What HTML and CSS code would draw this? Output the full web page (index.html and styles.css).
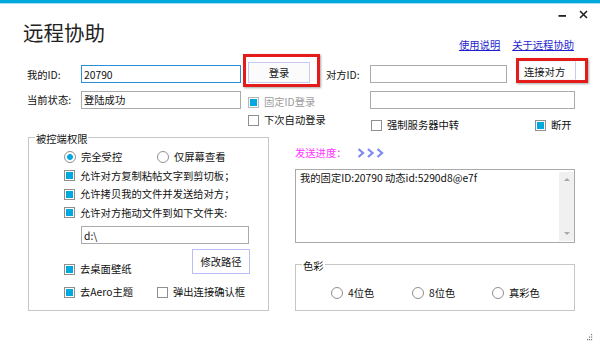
FILE: index.html
```html
<!DOCTYPE html>
<html lang="zh-CN">

<head>
    <meta charset="UTF-8">
    <meta name="viewport" content="width=device-width, initial-scale=1.0">
    <title>远程协助</title>
    <link rel="stylesheet" href="styles.css">
</head>

<body>
    <div class="topbar"></div>

    <div class="header">
        <h1 class="title">远程协助</h1>
        <div class="header-right">
            <div class="controls">
                <svg class="ctl" width="9" height="9" viewBox="0 0 9 9"><rect x="0.5" y="5" width="7.5" height="1.8" fill="#222"/></svg>
                <svg class="ctl" width="9" height="9" viewBox="0 0 9 9"><path d="M1 1 L8 8 M8 1 L1 8" stroke="#222" stroke-width="1.6"/></svg>
            </div>
            <div class="links">
                <a href="#">使用说明</a>
                <a href="#">关于远程协助</a>
            </div>
        </div>
    </div>

    <!-- login row -->
    <div class="row row1">
        <span class="lbl lbl-top">我的ID:</span>
        <input class="field field-focus w-main" type="text" value="20790">
        <div class="mark mark-login"><button class="btn btn-login">登录</button></div>
        <span class="lbl-peer">对方ID:</span>
        <input class="field w-peer" type="text" value="">
        <div class="mark mark-connect"><button class="btn btn-connect">连接对方</button></div>
    </div>

    <div class="row row2">
        <span class="lbl lbl-state">当前状态:</span>
        <input class="field w-main state" type="text" value="登陆成功">
        <label class="opt opt-fixed"><span class="cb on dim"></span><span class="dim-text">固定ID登录</span></label>
        <input class="field w-wide state" type="text" value="">
    </div>

    <div class="row row3">
        <label class="opt opt-auto"><span class="cb"></span>下次自动登录</label>
        <label class="opt opt-relay"><span class="cb"></span>强制服务器中转</label>
        <label class="opt opt-off"><span class="cb on"></span>断开</label>
    </div>

    <div class="main">
        <fieldset class="group group-left">
            <legend>被控端权限</legend>
            <div class="perm">
                <div class="prow">
                    <label class="opt w-93"><span class="rd on"></span>完全受控</label>
                    <label class="opt"><span class="rd"></span>仅屏幕查看</label>
                </div>
                <div class="prow"><label class="opt"><span class="cb on"></span>允许对方复制粘帖文字到剪切板；</label></div>
                <div class="prow"><label class="opt"><span class="cb on"></span>允许拷贝我的文件并发送给对方；</label></div>
                <div class="prow"><label class="opt"><span class="cb on"></span>允许对方拖动文件到如下文件夹:</label></div>
                <input class="field path" type="text" value="d:\">
                <div class="btn-row">
                    <label class="opt opt-wall"><span class="cb on"></span>去桌面壁纸</label>
                    <button class="btn btn-path">修改路径</button>
                </div>
                <div class="prow last-row">
                    <label class="opt w-93"><span class="cb on"></span>去Aero主题</label>
                    <label class="opt"><span class="cb"></span>弹出连接确认框</label>
                </div>
            </div>
        </fieldset>

        <div class="side">
            <div class="progress">
                <span>发送进度：</span>
                <svg class="chev" width="28" height="10" viewBox="0 0 28 10">
                    <path d="M1.5 1 L6 5 L1.5 9 M11 1 L15.5 5 L11 9 M20.5 1 L25 5 L20.5 9" fill="none" stroke="#7f8cf4" stroke-width="2.3"/>
                </svg>
            </div>
            <div class="log">
                <div class="log-text">我的固定ID:20790 动态id:5290d8@e7f</div>
                <div class="scroll">
                    <span class="arrow up"></span>
                    <span class="arrow down"></span>
                </div>
            </div>
            <fieldset class="group group-color">
                <legend>色彩</legend>
                <div class="color-opts">
                    <label class="opt w-81"><span class="rd"></span>4位色</label>
                    <label class="opt w-80"><span class="rd"></span>8位色</label>
                    <label class="opt"><span class="rd"></span>真彩色</label>
                </div>
            </fieldset>
        </div>
    </div>

    <svg class="grip" width="7" height="7" viewBox="0 0 7 7">
        <rect x="5" y="0" width="1.2" height="1.2" fill="#777"/>
        <rect x="3" y="2.5" width="1.2" height="1.2" fill="#777"/>
        <rect x="5" y="2.5" width="1.2" height="1.2" fill="#777"/>
        <rect x="1" y="5" width="1.2" height="1.2" fill="#777"/>
        <rect x="3" y="5" width="1.2" height="1.2" fill="#777"/>
        <rect x="5" y="5" width="1.2" height="1.2" fill="#777"/>
    </svg>
</body>

</html>
```

FILE: styles.css
```css
* {
    box-sizing: border-box;
}
body {
    margin: 0;
    width: 600px;
    height: 346px;
    overflow: hidden;
    position: relative;
    background-color: #FFFFFF;
    font-family: "Noto Sans CJK SC", sans-serif;
    font-size: 10.3px;
    line-height: 14px;
    color: #111;
}
.topbar {
    height: 4px;
    background-color: #00a9dc;
    border-bottom: 1px solid #a8ddf0;
}
.header {
    display: flex;
    justify-content: space-between;
    height: 50px;
}
.title {
    margin: 16px 0 0 23px;
    font-size: 20.5px;
    line-height: 24px;
    font-weight: normal;
    color: #222;
}
.header-right {
    display: flex;
    flex-direction: column;
    align-items: flex-end;
    padding-right: 12px;
}
.controls {
    display: flex;
    gap: 12px;
    margin-top: 6px;
}
.ctl {
    display: block;
}
.links {
    display: flex;
    gap: 12px;
    margin-top: 19px;
    margin-right: 14px;
}
.links a {
    color: #1f1fd0;
    text-decoration: underline;
}
.row {
    display: flex;
    align-items: flex-start;
}
.row > * {
    flex: none;
}
.row1 {
    height: 33px;
}
.row2 {
    height: 21.5px;
}
.row3 {
    height: 20.5px;
}
.lbl {
    width: 54px;
    margin-left: 27px;
}
.lbl-top {
    margin-top: 14px;
}
.lbl-state {
    margin-top: 6px;
}
.lbl-peer {
    width: 44px;
    margin: 14px 0 0 6px;
}
.field {
    height: 18px;
    border: 1px solid #ababab;
    padding: 0 2px;
    font: inherit;
    color: inherit;
    background-color: #FFFFFF;
    outline: none;
}
.field-focus {
    border-color: #2b8fd6;
}
.row1 .field {
    margin-top: 11px;
}
.row2 .state {
    margin-top: 3.5px;
}
.w-main {
    width: 160px;
}
.w-peer {
    width: 137px;
}
.w-wide {
    width: 205px;
}
.mark {
    display: flex;
    border: 3px solid #e31b1b;
    box-shadow: 1px 1px 2px rgba(0, 0, 0, 0.35);
}
.mark-login {
    width: 77px;
    height: 33px;
    margin-left: 2px;
}
.mark-connect {
    width: 72px;
    height: 25px;
    margin: 4px 0 0 9px;
}
.btn {
    font: inherit;
    color: inherit;
    background-color: #FFFFFF;
    border: 1px solid #c9c9f2;
    padding: 0;
    cursor: pointer;
}
.btn-login {
    flex: 1;
    margin: 5px 7px 1px 2px;
    background-color: #fbfbfb;
}
.btn-connect {
    flex: 1;
    margin-right: 9px;
    border-color: #f4f4fb #c9c9f2 #f4f4fb #f4f4fb;
    text-align: left;
    padding: 3px 0 0 4px;
}
.opt {
    display: flex;
    flex: none;
    align-items: center;
    gap: 5px;
    white-space: nowrap;
}
.cb {
    flex: none;
    width: 11px;
    height: 11px;
    border: 1px solid #8f8f8f;
    background-color: #FFFFFF;
}
.cb.on {
    background-color: #00a8e0;
    box-shadow: inset 0 0 0 1px #FFFFFF;
}
.cb.dim {
    border-color: #b8b8b8;
}
.dim-text {
    color: #9c9c9c;
}
.rd {
    flex: none;
    width: 12px;
    height: 12px;
    border: 1px solid #8f8f8f;
    border-radius: 50%;
    background-color: #FFFFFF;
}
.rd.on {
    background: radial-gradient(circle, #00a8e0 0 2.6px, #FFFFFF 3.2px);
}
.opt-fixed {
    width: 122px;
    margin: 8px 0 0 7px;
}
.opt-auto {
    width: 123px;
    margin: 4.5px 0 0 248px;
}
.opt-relay {
    width: 164px;
    margin-top: 9.5px;
}
.opt-off {
    margin-top: 9.5px;
}
.main {
    display: flex;
    align-items: flex-start;
}
.group {
    margin: 0;
    padding: 0;
    min-width: 0;
    border: 1px solid #c6c6c6;
}
.group legend {
    margin-left: 6px;
    padding: 4px 1px 0;
    line-height: 12px;
}
.group-left {
    flex: none;
    width: 241px;
    margin-left: 28px;
}
.perm {
    padding: 3px 0 8.5px 35px;
}
.prow {
    display: flex;
    align-items: center;
    height: 18.5px;
}
.w-93 {
    width: 93px;
}
.w-81 {
    width: 81px;
}
.w-80 {
    width: 80px;
}
.path {
    display: block;
    width: 168px;
    margin: 4px 0 0 17px;
}
.btn-row {
    display: flex;
    align-items: flex-start;
    height: 25px;
    margin-top: 5px;
}
.opt-wall {
    width: 128px;
    margin-top: 13px;
}
.btn-path {
    width: 58px;
    height: 25px;
    border-color: #bcbcf6;
}
.last-row {
    margin-top: 8.75px;
}
.side {
    flex: none;
    width: 280px;
    margin-left: 26px;
}
.progress {
    display: flex;
    align-items: center;
    margin-top: 17px;
    color: #ff33ff;
}
.chev {
    margin-left: 11px;
}
.log {
    display: flex;
    height: 74px;
    margin-top: 9px;
    border: 1px solid #a9a9a9;
}
.log-text {
    flex: 1;
    padding: 1px 4px;
}
.scroll {
    width: 15px;
    margin: 2px 0 1px;
    padding: 6px 0;
    background-color: #f0f0f0;
    display: flex;
    flex-direction: column;
    justify-content: space-between;
    align-items: center;
}
.arrow {
    width: 0;
    height: 0;
    border-left: 3px solid transparent;
    border-right: 3px solid transparent;
}
.arrow.up {
    border-bottom: 3px solid #a8a8a8;
}
.arrow.down {
    border-top: 3px solid #a8a8a8;
}
.group-color {
    margin-top: 13px;
}
.color-opts {
    display: flex;
    padding: 13.5px 0 10px 35px;
}
.grip {
    position: absolute;
    right: 7px;
    bottom: 5px;
}
```
